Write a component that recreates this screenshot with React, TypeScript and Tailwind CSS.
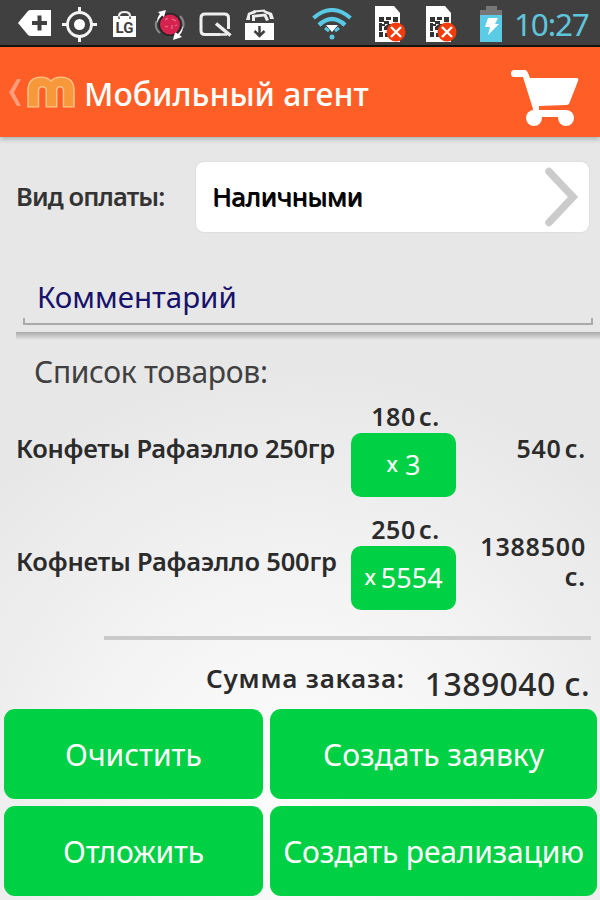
import React from "react";

type OrderItem = {
  id: number;
  name: string;
  nameClass: string;
  price: string;
  qty: string;
  qtyClass: string;
  total: string;
};

const ITEMS: OrderItem[] = [
  {
    id: 1,
    name: "Конфеты Рафаэлло 250гр",
    nameClass: "tracking-[-0.28px]",
    price: "180",
    qty: "3",
    qtyClass: "gap-[7px]",
    total: "540",
  },
  {
    id: 2,
    name: "Кофнеты Рафаэлло 500гр",
    nameClass: "tracking-[-0.2px]",
    price: "250",
    qty: "5554",
    qtyClass: "gap-[5px]",
    total: "1388500",
  },
];

/* ------------------------ STATUS BAR ICONS ------------------------ */
function SimIcon() {
  return (
    <svg className="h-[38px] w-[34px]" viewBox="0 0 34 38">
      <path d="M0 1H19L25 8V37H0Z" fill="#fff" />
      <path
        d="M4 12h5v5H4zM11 12h5v3h-5zM18 12h5v5h-5zM4 19h6v2H4zM4 27h4v5H4zM9 22l4-3h5v3l-4 3H9zM10 28h3v4h-3zM20 18h3v3h-3z"
        fill="#333"
      />
      <path d="M4 18v8h3v-8zM9 16h5v3H9z" fill="#333" />
      <circle cx="21" cy="27" r="9.500" fill="#f43b0b" />
      <path d="M16 22l10 10M26 22l-10 10" stroke="#fff" strokeWidth="2.400" />
    </svg>
  );
}

function StatusBar() {
  return (
    <div className="flex h-[47px] items-start border-b-2 border-[#111] bg-[#404040] pl-[17px]">
      <svg className="mt-[9px] h-7 w-[35px]" viewBox="0 0 35 28">
        <path d="M1 14L11 2Q12 1 14 1H34V27H14Q12 27 11 26Z" fill="#fff" />
        <path d="M22.500 6.500v15M15 14h15" stroke="#404040" strokeWidth="4" />
      </svg>
      <svg className="ml-2.5 mt-[7px] h-[35px] w-[35px]" viewBox="0 0 35 35" fill="none" stroke="#f4f4f4">
        <circle cx="17.500" cy="17.500" r="12" strokeWidth="2.800" />
        <circle cx="17.500" cy="17.500" r="5.500" fill="#fff" stroke="none" />
        <path d="M17.500 0v6M17.500 29v6M0 17.500h6M29 17.500h6" strokeWidth="3" />
      </svg>
      <svg className="ml-[15px] mt-[10px] h-7 w-[25px]" viewBox="0 0 25 28">
        <path d="M7 8V6Q7 2 12.500 2T18 6V8" fill="none" stroke="#eee" strokeWidth="2.200" />
        <path d="M1 6h23v21H1z" fill="#fff" />
        <path d="M7 9V6.500M18 9V6.500" stroke="#777" strokeWidth="2" />
        <text x="12.500" y="22.500" textAnchor="middle" fontSize="15" fontWeight="700" fill="#404040" className="font-['Roboto',sans-serif]">
          LG
        </text>
      </svg>
      <svg className="ml-[17px] mt-[9px] h-8 w-8" viewBox="0 0 32 32">
        <circle cx="16" cy="15.500" r="11.500" fill="#2a2326" />
        <path d="M6 24Q0 19 2.500 12" stroke="#888" strokeWidth="2" fill="none" />
        <path d="M3 14Q3 8 6 5L4 3 12 1 10 8 8 6.500Q5 9 3 14Z" fill="#fff" />
        <path d="M26 7Q31 12 29 19" stroke="#888" strokeWidth="2" fill="none" />
        <path d="M29 17Q29 23 25.500 26L28 28 19 31 21 23 24 25Q27 22 29 17Z" fill="#fff" />
        <circle cx="16" cy="15.500" r="10" fill="#d5224f" />
        <path d="M11 11l3-2M18 10l4 2M11 17l3 1M18 16v4M21 17l2-1" stroke="#ea7090" strokeWidth="1.200" />
      </svg>
      <svg className="ml-[13px] mt-[12px] h-[26px] w-[33px]" viewBox="0 0 33 26" fill="none" stroke="#eee">
        <path d="M21 22.500H6Q2 22.500 2 18.500V6Q2 2 6 2H25.500Q29.500 2 29.500 6V17" strokeWidth="3" />
        <path d="M17 11.500L31.500 23.500" strokeWidth="3.500" />
        <path d="M20 22.500h8" strokeWidth="2.500" />
      </svg>
      <svg className="ml-[12px] mt-[9px] h-8 w-[31px]" viewBox="0 0 31 32">
        <path d="M1 14h29v17H1z" fill="#fff" />
        <path d="M2 11L4 4 11 1 12 4 6 6V11ZM30 10L28 4 20 1 19 3 25 6 26 10ZM8 12V6L22 4.500 25 11 22 12 20 7.500 11 8.500 11 12Z" fill="#eee" />
        <path d="M10 2.500L21 1.500" stroke="#eee" strokeWidth="2" />
        <path d="M15.500 17v10M10.500 22l5 5 5-5" fill="none" stroke="#404040" strokeWidth="2.500" />
      </svg>
      <svg className="ml-[37px] mt-[8px] h-8 w-10" viewBox="0 0 40 32" fill="none">
        <path d="M1.500 10Q20-6 38.500 10" stroke="#58c8e4" strokeWidth="4" />
        <path d="M7 17Q20 5 33 17" stroke="#58c8e4" strokeWidth="4.500" />
        <path d="M14 17H26L20 24Z" fill="#fff" />
        <path d="M13 20l4 3M27 20l-4 3" stroke="#58c8e4" strokeWidth="3" />
        <circle cx="20" cy="29" r="2.500" fill="#58c8e4" />
      </svg>
      <div className="ml-[23px] mt-[5px] flex gap-[17px]">
        <SimIcon />
        <SimIcon />
      </div>
      <svg className="ml-[19px] mt-[6px] h-9 w-[25px]" viewBox="0 0 25 36">
        <path d="M7 0H18V4H23V9H1V4H7Z" fill="#777" />
        <path d="M1 9H23V36H1Z" fill="#5bcbe6" />
        <path d="M9 12H19L16 18H20L9 29L11 21H6Z" fill="#fff" />
      </svg>
      <span className="ml-[10px] text-[31.500px] leading-[47px] tracking-[-1.2px] text-[#5fc5dc]">10:27</span>
    </div>
  );
}

function Header() {
  return (
    <header className="flex h-[90px] items-center bg-[#ff5f26] pl-2 shadow-[0_2px_5px_rgba(60,90,90,0.4)]">
      <svg className="h-[27px] w-[13px]" viewBox="0 0 13 27">
        <path d="M9 0h4L6 13.500 13 27H9L1 13.500Z" fill="#ff9c7c" />
      </svg>
      <svg className="ml-[6px] h-[33px] w-[48px]" viewBox="0 0 50 34">
        <path
          d="M1 32V15Q1 1 15 1Q21 1 25 5Q29 1 35 1Q49 1 49 15V32H38V15Q38 11 34.500 11T31 15V32H20V15Q20 11 16 11T12 15V32Z"
          fill="#f7983a"
          stroke="#ffc489"
          strokeWidth="1.500"
        />
      </svg>
      <h1 className="ml-[9px] mt-[3px] text-[32px] font-medium leading-10 text-white">Мобильный агент</h1>
      <svg className="ml-auto mr-[21px] mt-[12px] h-[58px] w-[69px]" viewBox="0 0 69 58" fill="#fff">
        <path d="M4 1H15Q17 1 18 4L20 9H67Q69 9 68 12L59 35Q58 36 56 36L29 37 29 41H56V48H26Q21 46 23 40L13 8H4Q1 8 1 4.500T4 1Z" />
        <circle cx="24" cy="49" r="8" />
        <circle cx="56" cy="49" r="8" />
      </svg>
    </header>
  );
}

/* ------------------------ ORDER LIST ------------------------ */
function OrderRow({ item }: { item: OrderItem }) {
  return (
    <li className="flex h-24 items-center pl-4 pr-[14px] font-semibold text-[#2b2b2b]">
      <span className={`w-[335px] shrink-0 whitespace-nowrap pb-[2px] text-[25.500px] ${item.nameClass}`}>{item.name}</span>
      <div className="w-[105px] shrink-0">
        <div className="flex h-8 justify-center gap-[3px] pl-1 text-[25px] leading-[30px] tracking-[0.6px]">
          <span>{item.price}</span>
          <span>с.</span>
        </div>
        <button className={`flex h-16 w-full items-center justify-center rounded-[10px] bg-[#00d044] font-normal text-white ${item.qtyClass}`}>
          <span className="text-[21px] font-medium">x</span>
          <span className="text-[27px]">{item.qty}</span>
        </button>
      </div>
      <div className="ml-5 flex grow flex-wrap justify-end gap-x-[3px] pb-[3px] text-[25px] leading-[30px] tracking-[0.8px]">
        <span>{item.total}</span>
        <span>с.</span>
      </div>
    </li>
  );
}

function ActionButton({ label, className }: { label: string; className?: string }) {
  return (
    <button className={`h-[90px] whitespace-nowrap rounded-[11px] bg-[#00d044] text-[30px] text-white ${className ?? ""}`}>
      {label}
    </button>
  );
}

export default function App() {
  return (
    <div className="flex h-[900px] w-[600px] flex-col overflow-hidden bg-[radial-gradient(circle_at_300px_800px,#fcfcfc_0,#f6f6f6_170px,#e7e7e7_440px)] font-['Noto_Sans',sans-serif]">
      <StatusBar />
      <Header />

      <section className="mt-[25px] flex h-[70px] items-center pl-4">
        <span className="w-[180px] pb-px text-[25.500px] font-semibold tracking-[-0.9px] text-[#333]">Вид оплаты:</span>
        <button className="flex h-full w-[393px] items-center justify-between rounded-lg bg-white pl-4 pr-2.5 text-[26px] tracking-[-0.2px] text-black shadow-[0_0_2px_rgba(0,0,0,0.12)] [text-shadow:1px_1px_0_#111]">
          <span className="pb-px">Наличными</span>
          <svg className="h-[60px] w-[35px]" viewBox="0 0 35 60" fill="none">
            <path d="M5 4.500L29 30L5 55.500" stroke="#cbcbcb" strokeWidth="7.500" strokeLinecap="round" />
          </svg>
        </button>
      </section>

      {/* comment field: underline with small ticks at both ends */}
      <div className="ml-[23px] mr-[7px] mt-[37px] flex h-[56px] flex-col">
        <span className="pl-[14px] text-[29.500px] leading-[56px] text-[#17126b]">Комментарий</span>
        <div className="-mt-[7px] h-[7px] shrink-0 border-2 border-t-0 border-[#aaa]" />
      </div>
      <div className="ml-4 mt-[7px] h-2 shrink-0 bg-gradient-to-b from-[#a9a9a9] to-[#e7e7e7]" />

      <h2 className="mt-3 pl-[34px] text-[30px] leading-10 tracking-[-0.3px] text-[#404040]">Список товаров:</h2>

      <ul className="mt-[9px] flex flex-col gap-[17px]">
        {ITEMS.map((item) => (
          <OrderRow key={item.id} item={item} />
        ))}
      </ul>

      <div className="ml-[104px] mr-[9px] mt-[26px] h-1 shrink-0 bg-[#cacaca]" />

      <div className="mt-5 flex h-[49px] justify-end pr-2.5 font-semibold text-[#2b2b2b]">
        <span className="mr-[20px] text-[26px] leading-[37px] tracking-[0.8px]">Сумма заказа:</span>
        <span className="text-[32px] font-medium leading-[47px] tracking-[0.4px]">1389040 с.</span>
      </div>

      <div className="grid grid-cols-[259px_327px] gap-x-[7px] gap-y-[7px] pl-1">
        <ActionButton label="Очистить" />
        <ActionButton label="Создать заявку" />
        <ActionButton label="Отложить" className="tracking-[-0.2px]" />
        <ActionButton label="Создать реализацию" className="tracking-[-0.2px]" />
      </div>
    </div>
  );
}
